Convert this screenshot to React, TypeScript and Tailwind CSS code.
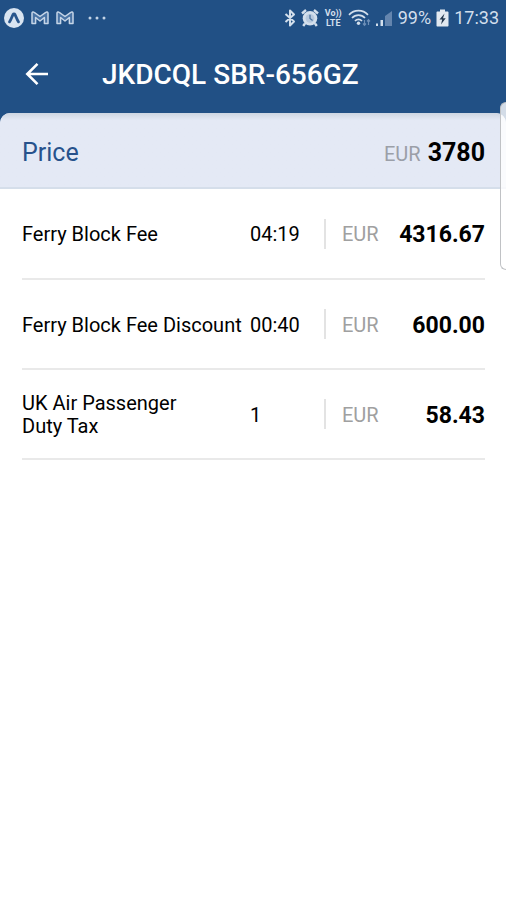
type Fee = {
  name: string
  quantity: string
  currency: string
  amount: string
}

const fees: Fee[] = [
  { name: 'Ferry Block Fee', quantity: '04:19', currency: 'EUR', amount: '4316.67' },
  { name: 'Ferry Block Fee Discount', quantity: '00:40', currency: 'EUR', amount: '600.00' },
  { name: 'UK Air Passenger\nDuty Tax', quantity: '1', currency: 'EUR', amount: '58.43' },
]

function AppBadgeIcon() {
  return (
    <svg width="20" height="20" viewBox="0 0 20 20" aria-hidden="true">
      <circle cx="10" cy="10" r="10" fill="#d9e4f1" />
      <path
        d="M5.5 13.8C7 12 8 8.500 9 6.600c.5-.8 1.500-.8 2 0 1 1.900 2 5.400 3.500 7.200"
        fill="none"
        stroke="#28558c"
        strokeWidth="2.800"
        strokeLinecap="round"
      />
    </svg>
  )
}

function MailIcon() {
  return (
    <svg width="18" height="14" viewBox="0 0 18 14" aria-hidden="true">
      <path
        d="M1 2C1 1 2.300.600 3.200 1.300L9 5.500l5.800-4.200C15.700.600 17 1 17 2V12.500h-3.600V6.500L9 10 4.600 6.500v6H1z"
        fill="#4a74a5"
        stroke="#c6d5e7"
        strokeWidth="1.500"
        strokeLinejoin="round"
      />
    </svg>
  )
}

function DotsIcon() {
  return (
    <svg width="18" height="4" viewBox="0 0 18 4" fill="#c3d3e6" aria-hidden="true">
      <circle cx="2" cy="2" r="1.500" />
      <circle cx="9" cy="2" r="1.500" />
      <circle cx="16" cy="2" r="1.500" />
    </svg>
  )
}

function BluetoothIcon() {
  return (
    <svg width="12" height="18" viewBox="0 0 12 18" aria-hidden="true">
      <path
        d="M1.500 5l8.500 7.500L6 16.500v-15l4 4L1.500 13"
        fill="none"
        stroke="#d3dfec"
        strokeWidth="2"
        strokeLinejoin="round"
      />
    </svg>
  )
}

function AlarmIcon() {
  return (
    <svg width="18" height="18" viewBox="0 0 18 18" aria-hidden="true">
      <path d="M1 4.500L5 1M17 4.500L13 1M4 14.500L2.200 17M14 14.500l1.800 2.500" stroke="#d3dfec" strokeWidth="2.400" />
      <circle cx="9" cy="9.300" r="7.300" fill="#d3dfec" />
      <circle cx="9" cy="9.300" r="4.400" fill="#b7c9de" />
      <path d="M9 5.800v3.700l2.600 2" fill="none" stroke="#4c749f" strokeWidth="1.300" />
    </svg>
  )
}

function WifiIcon() {
  return (
    <svg width="23" height="18" viewBox="0 0 23 18" aria-hidden="true">
      <g fill="none" stroke="#d3dfec" strokeWidth="1.700">
        <path d="M1 5.800c5.200-5.600 13.800-5.600 19 0" />
        <path d="M4 9c3.600-3.900 9.400-3.900 13 0" />
        <path d="M7 12c2-2.200 5-2.200 7 0" />
      </g>
      <circle cx="10.500" cy="14.200" r="1.700" fill="#d3dfec" />
      <path d="M16.500 11v5M15 14.500l1.500 1.800 1.500-1.800M20.500 16v-5M19 12.500l1.500-1.800 1.500 1.800" fill="none" stroke="#6d8fb7" strokeWidth="1.200" />
    </svg>
  )
}

function SignalIcon() {
  return (
    <svg width="17" height="17" viewBox="0 0 17 17" aria-hidden="true">
      <path d="M0 16v-2.500h2V16z" fill="#d3dfec" />
      <path d="M4.500 16V10h2.500v6z" fill="#d3dfec" />
      <path d="M9 16V6L16 1v15z" fill="#6485ae" />
    </svg>
  )
}

function BatteryIcon() {
  return (
    <svg width="13" height="18" viewBox="0 0 13 18" aria-hidden="true">
      <path d="M4 .500h5v2h2.500c.500 0 1 .400 1 1V16.500c0 .600-.500 1-1 1h-10c-.500 0-1-.400-1-1V3.500c0-.600.500-1 1-1H4z" fill="#e1e8f0" />
      <path d="M8.500 4.500L3.500 10.500h2.700L5 15.500 9.700 9.200H7z" fill="#24384f" />
    </svg>
  )
}

function StatusBar() {
  return (
    <div className="flex h-9 items-center justify-between pl-1 pr-[7px] text-lg text-[#d3dfec]">
      <div className="flex items-center gap-[7px]">
        <AppBadgeIcon />
        <MailIcon />
        <MailIcon />
        <span className="pl-[7px]">
          <DotsIcon />
        </span>
      </div>
      <div className="flex items-center gap-[5px]">
        <BluetoothIcon />
        <AlarmIcon />
        <span className="flex w-[19px] flex-col items-center text-[9px] font-bold leading-[10px]">
          <span>Vo))</span>
          <span>LTE</span>
        </span>
        <WifiIcon />
        <SignalIcon />
        <span>99%</span>
        <BatteryIcon />
        <span>17:33</span>
      </div>
    </div>
  )
}

function TitleBar() {
  return (
    <div className="flex h-[77px] items-center gap-[52px] px-6 text-white">
      <button type="button" aria-label="Back">
        <svg width="26" height="26" viewBox="0 0 26 26" fill="none" stroke="currentColor" strokeWidth="2.600" aria-hidden="true">
          <path d="M24 12H3.500M13.500 1.800L3.300 12l10.200 10.200" />
        </svg>
      </button>
      <h1 className="text-[28px] font-medium">JKDCQL SBR-656GZ</h1>
    </div>
  )
}

function FeeRow({ name, quantity, currency, amount }: Fee) {
  return (
    <tr className="h-[90px] border-b-2 border-[#e9e9e9]">
      <th scope="row" className="whitespace-pre-line pt-[2px] text-left font-normal">
        {name}
      </th>
      <td className="w-[74px] pt-[2px]">{quantity}</td>
      <td className="w-[60px] text-[#a0a0a0]">
        <span className="flex h-[30px] items-center border-l-2 border-[#e3e3e3] pl-4 pt-[2px]">{currency}</span>
      </td>
      <td className="w-[101px] pt-[2px] text-right text-[23px] font-bold">{amount}</td>
    </tr>
  )
}

export default function App() {
  return (
    <div className="relative min-h-screen bg-white font-['Roboto',sans-serif] text-black">
      <header className="bg-[#215085]">
        <StatusBar />
        <TitleBar />
      </header>

      <main>
        <div className="bg-[#215085]">
          <div className="flex h-[76px] items-center justify-between rounded-t-[10px] border-b-2 border-[#d5deea] bg-[#e4e9f5] bg-linear-to-b from-[#cdd6e2] to-[#e4e9f5] to-10% pl-[22px] pr-[21px] pt-[6px]">
            <h2 className="text-[25px] text-[#27528c]">Price</h2>
            <p className="flex items-baseline gap-[7px]">
              <span className="text-[20px] text-[#9b9fa8]">EUR</span>
              <span className="text-[25px] font-bold">3780</span>
            </p>
          </div>
        </div>

        <div className="pl-[22px] pr-[21px]">
          <table className="w-full text-[20px] leading-[23px]">
            <tbody>
              {fees.map((fee) => (
                <FeeRow key={fee.name} {...fee} />
              ))}
            </tbody>
          </table>
        </div>
      </main>

      {/* edge panel handle */}
      <div className="absolute right-0 top-[102px] h-[168px] w-[6px] rounded-l-[8px] border border-r-0 border-[#c0c2c5] bg-white/80" />
    </div>
  )
}
